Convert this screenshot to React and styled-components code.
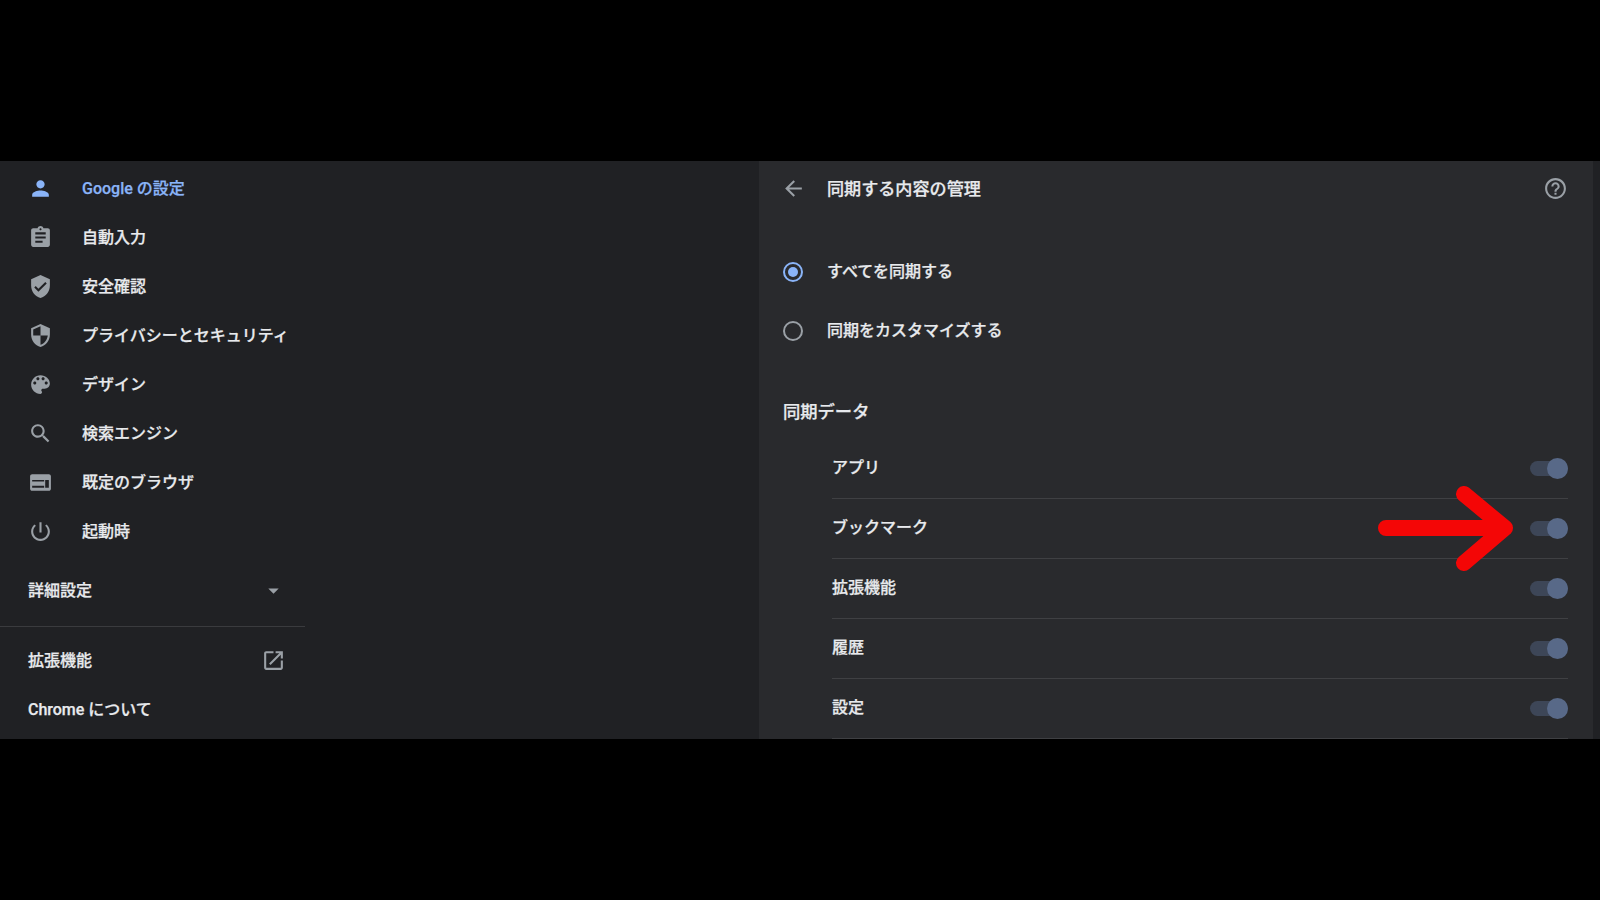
import React from 'react';
import styled, { createGlobalStyle } from 'styled-components';

const Global = createGlobalStyle`
  html, body { margin: 0; padding: 0; background: #000; }
  body { font-family: Roboto, "Noto Sans CJK JP", sans-serif; -webkit-text-stroke: 0.25px currentColor; }
`;

const Page = styled.div`
  width: 1600px; height: 900px; background: #000; padding-top: 161px; box-sizing: border-box; overflow: hidden;
`;
const Frame = styled.div`
  position: relative; display: flex; height: 578px; background: #202124;
`;
const Sidebar = styled.nav`
  width: 759px; flex: none; padding-top: 3px; box-sizing: border-box;
`;
const NavList = styled.div`
  width: 305px; display: flex; flex-direction: column;
`;
const NavRow = styled.div`
  height: 49px; display: flex; align-items: center; flex: none;
  padding-left: 28px; padding-right: 19px; box-sizing: border-box; gap: 29px; white-space: nowrap;
  font-size: 16px; font-weight: 500; color: ${p => (p.$active ? '#8ab4f8' : '#e8eaed')};
  svg { color: ${p => (p.$active ? '#8ab4f8' : '#9aa0a6')}; }
`;
const NavLabel = styled.span`
  margin-bottom: 3px;
`;
const PlainRow = styled(NavRow)`
  justify-content: space-between; gap: 0; margin-top: ${p => p.$top || 0}px;
`;
const Divider = styled.div`
  height: 1px; background: #3a3b3e; margin: 11px 0 9px;
`;
const Main = styled.main`
  width: 834px; flex: none; background: #292a2d; color: #e8eaed; font-size: 16px; font-weight: 500;
  display: flex; flex-direction: column;
`;
const Header = styled.header`
  height: 54px; flex: none; display: flex; align-items: center; padding: 0 25px 0 22px; gap: 21px; font-size: 17.1px;
`;
const HeaderTitle = styled.div`
  flex: 1; margin-bottom: 2px;
`;
const RadioGroup = styled.div`
  margin-top: 27px; display: flex; flex-direction: column;
`;
const RadioRow = styled.label`
  height: 59px; display: flex; align-items: center; padding-left: 24px; gap: 24px; font-size: 16px;
`;
const RadioCircle = styled.span`
  width: 20px; height: 20px; border-radius: 50%; box-sizing: border-box; flex: none;
  border: 2px solid ${p => (p.$on ? '#8ab4f8' : '#9aa0a6')};
  display: flex; align-items: center; justify-content: center;
  &::after { content: ''; width: 10px; height: 10px; border-radius: 50%; background: ${p => (p.$on ? '#8ab4f8' : 'transparent')}; }
`;
const RadioLabel = styled.span`
  margin-bottom: 4px;
`;
const SectionTitle = styled.h2`
  margin: 21px 0 0; padding: 19px 0 0 24px; height: 60px; box-sizing: border-box;
  font-size: 17.3px; font-weight: inherit; line-height: 24px;
`;
const SyncList = styled.div`
  margin: 0 25px 0 73px;
`;
const SyncRow = styled.div`
  height: 60px; box-sizing: border-box; display: flex; align-items: center; justify-content: space-between;
  border-bottom: 1px solid #3f4043; font-size: 16px;
`;
const SyncLabel = styled.span`
  margin-bottom: 5px;
`;
const Toggle = styled.span`
  position: relative; width: 38px; height: 15px; border-radius: 8px; background: #3d4657; flex: none; margin-bottom: 1px;
  &::after { content: ''; position: absolute; right: 0; top: -3px; width: 21px; height: 21px; border-radius: 50%; background: #586988; }
`;
const Strip = styled.div`
  flex: 1; background: #202124;
`;
const ArrowMark = styled.svg`
  position: absolute; left: 1370px; top: 325px;
`;

const P = {
  person: 'M12 12c2.21 0 4-1.79 4-4s-1.79-4-4-4-4 1.79-4 4 1.79 4 4 4zm0 2c-2.67 0-8 1.34-8 4v2h16v-2c0-2.66-5.33-4-8-4z',
  assignment: 'M19 3h-4.18C14.4 1.84 13.3 1 12 1c-1.3 0-2.4.84-2.82 2H5c-1.1 0-2 .9-2 2v14c0 1.1.9 2 2 2h14c1.1 0 2-.9 2-2V5c0-1.1-.9-2-2-2zm-7 0c.55 0 1 .45 1 1s-.45 1-1 1-1-.45-1-1 .45-1 1-1zm2 14H7v-2h7v2zm3-4H7v-2h10v2zm0-4H7V7h10v2z',
  verified: 'M12 1L3 5v6c0 5.55 3.84 10.74 9 12 5.16-1.26 9-6.45 9-12V5l-9-4zm-2 16l-4-4 1.41-1.41L10 14.17l6.59-6.59L18 9l-8 8z',
  security: 'M12 1L3 5v6c0 5.55 3.84 10.74 9 12 5.16-1.26 9-6.45 9-12V5l-9-4zm0 10.99h7c-.53 4.12-3.28 7.79-7 8.94V12H5V6.3l7-3.11v8.8z',
  palette: 'M12 3c-4.97 0-9 4.03-9 9s4.03 9 9 9c.83 0 1.5-.67 1.5-1.5 0-.39-.15-.74-.39-1.01-.23-.26-.38-.61-.38-.99 0-.83.67-1.5 1.5-1.5H16c2.76 0 5-2.24 5-5 0-4.42-4.03-8-9-8zm-5.5 9c-.83 0-1.5-.67-1.5-1.5S5.67 9 6.5 9 8 9.67 8 10.5 7.33 12 6.5 12zm3-4C8.67 8 8 7.33 8 6.5S8.67 5 9.5 5s1.5.67 1.5 1.5S10.33 8 9.5 8zm5 0c-.83 0-1.5-.67-1.5-1.5S13.67 5 14.5 5s1.5.67 1.5 1.5S15.33 8 14.5 8zm3 4c-.83 0-1.5-.67-1.5-1.5S16.67 9 17.5 9s1.5.67 1.5 1.5-.67 1.5-1.5 1.5z',
  search: 'M15.5 14h-.79l-.28-.27C15.41 12.59 16 11.11 16 9.5 16 5.91 13.09 3 9.5 3S3 5.91 3 9.5 5.91 16 9.5 16c1.61 0 3.09-.59 4.23-1.57l.27.28v.79l5 4.99L20.49 19l-4.99-5zm-6 0C7.01 14 5 11.99 5 9.5S7.01 5 9.5 5 14 7.01 14 9.5 11.99 14 9.5 14z',
  browser: 'M20 4H4c-1.1 0-2 .9-2 2v12c0 1.1.9 2 2 2h16c1.1 0 2-.9 2-2V6c0-1.1-.9-2-2-2zM4 11V9.5h11.5V11H4zm0 6v-2h11.5v2H4zm12.5 0V9.5H20V17h-3.5z',
  power: 'M13 3h-2v10h2V3zm4.83 2.17l-1.42 1.42C17.99 7.86 19 9.81 19 12c0 3.87-3.13 7-7 7s-7-3.13-7-7c0-2.19 1.01-4.14 2.58-5.42L6.17 5.17C4.23 6.82 3 9.26 3 12c0 4.97 4.03 9 9 9s9-4.03 9-9c0-2.74-1.23-5.18-3.17-6.83z',
  open: 'M19 19H5V5h7V3H5c-1.11 0-2 .9-2 2v14c0 1.1.89 2 2 2h14c1.1 0 2-.9 2-2v-7h-2v7zM14 3v2h3.59l-9.83 9.83 1.41 1.41L19 6.41V10h2V3h-7z',
  back: 'M20 11H7.83l5.59-5.59L12 4l-8 8 8 8 1.41-1.41L7.83 13H20v-2z',
  help: 'M11 18h2v-2h-2v2zm1-16C6.48 2 2 6.48 2 12s4.48 10 10 10 10-4.48 10-10S17.52 2 12 2zm0 18c-4.41 0-8-3.59-8-8s3.59-8 8-8 8 3.59 8 8-3.59 8-8 8zm0-14c-2.21 0-4 1.79-4 4h2c0-1.1.9-2 2-2s2 .9 2 2c0 2-3 1.75-3 5h2c0-2.25 3-2.5 3-5 0-2.21-1.79-4-4-4z',
  caret: 'M7 10l5 5 5-5z',
};

const IconSvg = styled.svg`
  flex: none; display: block; color: #9aa0a6;
`;
const Icon = ({ d, size = 25 }) => (
  <IconSvg width={size} height={size} viewBox="0 0 24 24" fill="currentColor"><path d={P[d]} /></IconSvg>
);

const nav = [
  ['person', 'Google の設定', true],
  ['assignment', '自動入力'],
  ['verified', '安全確認'],
  ['security', 'プライバシーとセキュリティ'],
  ['palette', 'デザイン'],
  ['search', '検索エンジン'],
  ['browser', '既定のブラウザ'],
  ['power', '起動時'],
];
const sync = ['アプリ', 'ブックマーク', '拡張機能', '履歴', '設定'];

export default function App() {
  return (
    <Page>
      <Global />
      <Frame>
        <Sidebar>
          <NavList>
            {nav.map(([ic, label, active]) => (
              <NavRow key={label} $active={active}><Icon d={ic} /><NavLabel>{label}</NavLabel></NavRow>
            ))}
            <PlainRow $top={10}><NavLabel>詳細設定</NavLabel><Icon d="caret" /></PlainRow>
            <Divider />
            <PlainRow><NavLabel>拡張機能</NavLabel><Icon d="open" /></PlainRow>
            <PlainRow><NavLabel>Chrome について</NavLabel></PlainRow>
          </NavList>
        </Sidebar>
        <Main>
          <Header>
            <Icon d="back" />
            <HeaderTitle>同期する内容の管理</HeaderTitle>
            <Icon d="help" />
          </Header>
          <RadioGroup>
            <RadioRow><RadioCircle $on /><RadioLabel>すべてを同期する</RadioLabel></RadioRow>
            <RadioRow><RadioCircle /><RadioLabel>同期をカスタマイズする</RadioLabel></RadioRow>
          </RadioGroup>
          <SectionTitle>同期データ</SectionTitle>
          <SyncList>
            {sync.map(s => (
              <SyncRow key={s}><SyncLabel>{s}</SyncLabel><Toggle /></SyncRow>
            ))}
          </SyncList>
        </Main>
        <Strip />
        <ArrowMark width="150" height="85" viewBox="0 0 150 85" fill="none" stroke="#f40606" strokeWidth="16" strokeLinecap="round" strokeLinejoin="round">
          <path d="M16 42H135M94 8L135 42L94 77" />
        </ArrowMark>
      </Frame>
    </Page>
  );
}
